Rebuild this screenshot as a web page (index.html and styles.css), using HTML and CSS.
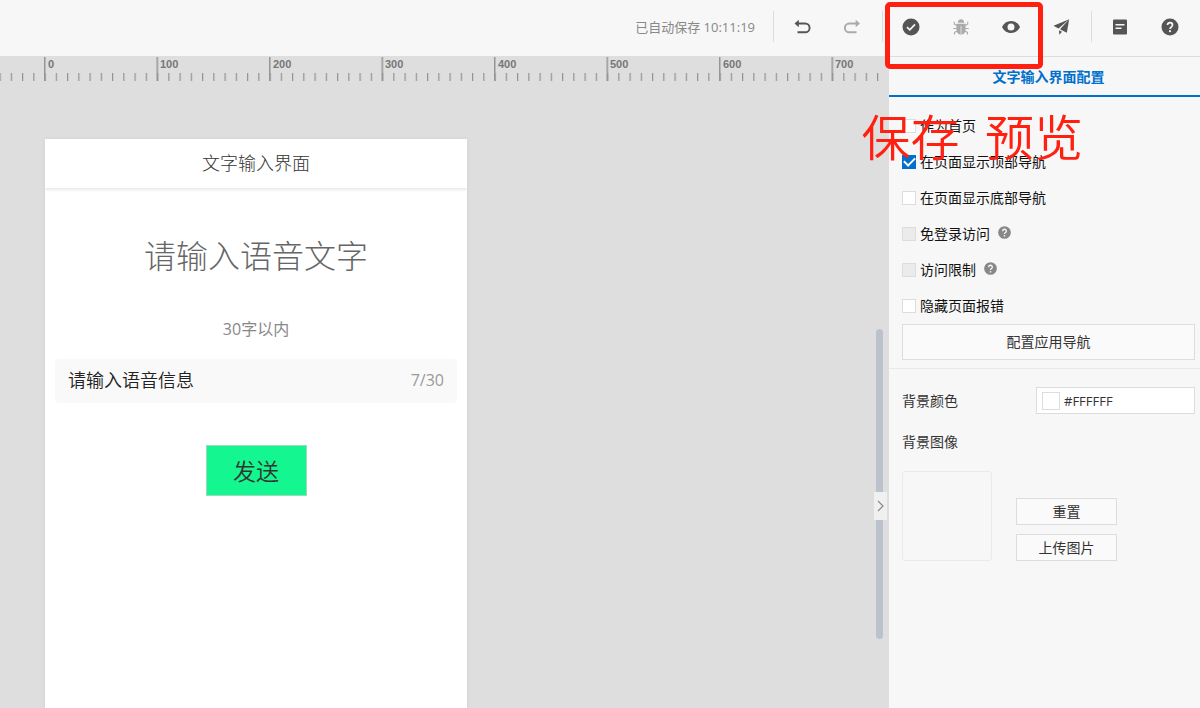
FILE: index.html
```html
<!DOCTYPE html>
<html lang="zh-CN">
<head>
<meta charset="utf-8">
<title>文字输入界面</title>
<link rel="stylesheet" href="styles.css">
</head>
<body>
<div class="app">
  <header class="toolbar">
    <span class="status">已自动保存 10:11:19</span>
    <span class="divider"></span>
    <button class="tool" aria-label="撤销"><svg width="20" height="20" viewBox="0 0 20 20"><path d="M6 6.500h7.200a4.400 4.400 0 0 1 0 8.800H5.500" fill="none" stroke="#555" stroke-width="1.900"/><path d="M2.500 6.500l4.300-3.700v7.400z" fill="#555"/></svg></button>
    <button class="tool" aria-label="重做"><svg width="20" height="20" viewBox="0 0 20 20"><path d="M14 6.500H7.300a4.400 4.400 0 0 0 0 8.800h7.200" fill="none" stroke="#aaa" stroke-width="1.900"/><path d="M18 6.500l-4.300-3.700v7.400z" fill="#aaa"/></svg></button>
    <span class="divider"></span>
    <button class="tool" aria-label="保存"><svg width="20" height="20" viewBox="0 0 20 20"><circle cx="10" cy="10" r="8.500" fill="#555"/><path d="M6 10.200l2.800 2.700 5.200-5.600" fill="none" stroke="#f7f7f7" stroke-width="1.700"/></svg></button>
    <button class="tool" aria-label="调试"><svg width="20" height="20" viewBox="0 0 20 20"><path d="M6.800 5.800C6.800 1.200 13.200 1.200 13.200 5.800z" fill="#aaa"/><path d="M5.400 6.800h9.200v5.700c0 3.200-1.800 5-4.600 5s-4.600-1.800-4.600-5z" fill="#aaa"/><path d="M10 9v8" stroke="#dedede" stroke-width="1"/><path d="M5.800 8.500L3.300 7.200V4.800M14.200 8.500l2.500-1.300V4.800M5.600 11.500H2.200M14.400 11.500h3.400M6 14.200l-2.500 1.100v2.200M14 14.200l2.500 1.100v2.200" fill="none" stroke="#aaa" stroke-width="1.100"/></svg></button>
    <button class="tool" aria-label="预览"><svg width="20" height="20" viewBox="0 0 20 20"><path fill-rule="evenodd" d="M1 10c1.800-3.800 5-6 9-6s7.200 2.200 9 6c-1.800 3.800-5 6-9 6s-7.200-2.200-9-6zm9-3.500a3.500 3.500 0 1 0 0 7 3.500 3.500 0 0 0 0-7z" fill="#555"/></svg></button>
    <button class="tool" aria-label="发布"><svg width="20" height="20" viewBox="0 0 20 20"><path d="M18.200 2.200L2.500 8.800l5 2.800z" fill="#555"/><path d="M18.200 2.200L9 12.300l6.800 3.500z" fill="#555"/><path d="M8 13.200l3 1.600-2.700 3z" fill="#555"/></svg></button>
    <span class="divider"></span>
    <button class="tool" aria-label="文档"><svg width="20" height="20" viewBox="0 0 20 20"><rect x="3" y="2.500" width="14" height="15" rx="1" fill="#555"/><path d="M5.500 7.800h9M5.500 11.200h6" stroke="#f7f7f7" stroke-width="1.500"/></svg></button>
    <button class="tool" aria-label="帮助"><svg width="20" height="20" viewBox="0 0 20 20"><circle cx="10" cy="10" r="8.500" fill="#555"/><path d="M7.500 8.100c0-3.300 5-3.300 5 0 0 2-2.500 2-2.500 4" fill="none" stroke="#f7f7f7" stroke-width="1.700"/><circle cx="10" cy="14.200" r="1.100" fill="#f7f7f7"/></svg></button>
  </header>

  <main class="stage">
    <svg class="ruler" height="26" aria-label="标尺">
      <defs>
        <pattern id="minor" x="44.500" y="0" width="11.250" height="26" patternUnits="userSpaceOnUse"><rect y="17" width="1.200" height="8" fill="#929292"/></pattern>
        <pattern id="major" x="44" y="0" width="112.500" height="26" patternUnits="userSpaceOnUse"><rect y="1" width="1.500" height="24" fill="#959595"/></pattern>
      </defs>
      <rect width="100%" height="26" fill="url(#minor)"/>
      <rect width="100%" height="26" fill="url(#major)"/>
      <g class="ruler-labels">
        <text x="48" y="12">0</text><text x="160" y="12">100</text><text x="273" y="12">200</text><text x="385" y="12">300</text><text x="498" y="12">400</text><text x="610" y="12">500</text><text x="723" y="12">600</text><text x="835" y="12">700</text>
      </g>
    </svg>
    <section class="phone">
      <h1 class="phone-nav">文字输入界面</h1>
      <div class="phone-body">
        <h2 class="headline">请输入语音文字</h2>
        <p class="hint">30字以内</p>
        <label class="field"><input class="field-input" value="请输入语音信息" aria-label="语音信息"><span class="counter">7/30</span></label>
        <button class="send">发送</button>
      </div>
    </section>
    <div class="scrollbar"></div>
    <button class="collapse" aria-label="收起面板"><svg width="9" height="12" viewBox="0 0 9 12"><path d="M2 1l5 5-5 5" fill="none" stroke="#888" stroke-width="1.200"/></svg></button>
  </main>

  <aside class="panel">
    <h2 class="tab">文字输入界面配置</h2>
    <div class="options">
      <label class="option"><input class="check" type="checkbox">作为首页</label>
      <label class="option"><input class="check" type="checkbox" checked>在页面显示顶部导航</label>
      <label class="option"><input class="check" type="checkbox">在页面显示底部导航</label>
      <label class="option"><input class="check" type="checkbox" disabled>免登录访问<svg class="help" width="13" height="13" viewBox="0 0 20 20"><circle cx="10" cy="10" r="9.800" fill="#888"/><path d="M7.200 8c0-4 5.600-4 5.600 0 0 2.200-2.800 2-2.800 4.300" fill="none" stroke="#f7f7f7" stroke-width="2"/><circle cx="10" cy="15" r="1.300" fill="#f7f7f7"/></svg></label>
      <label class="option"><input class="check" type="checkbox" disabled>访问限制<svg class="help" width="13" height="13" viewBox="0 0 20 20"><circle cx="10" cy="10" r="9.800" fill="#888"/><path d="M7.200 8c0-4 5.600-4 5.600 0 0 2.200-2.800 2-2.800 4.300" fill="none" stroke="#f7f7f7" stroke-width="2"/><circle cx="10" cy="15" r="1.300" fill="#f7f7f7"/></svg></label>
      <label class="option"><input class="check" type="checkbox">隐藏页面报错</label>
      <button class="btn btn-wide">配置应用导航</button>
    </div>
    <div class="background">
      <div class="color-row">
        <label for="bg-color">背景颜色</label>
        <div class="color-box"><span class="swatch"></span><input class="color-input" id="bg-color" value="#FFFFFF"></div>
      </div>
      <div class="image-title">背景图像</div>
      <div class="image-row">
        <div class="thumb"></div>
        <div class="image-actions">
          <button class="btn">重置</button>
          <button class="btn">上传图片</button>
        </div>
      </div>
    </div>
  </aside>

  <div class="mark-box"></div>
  <div class="mark-text">保存  预览</div>
</div>
</body>
</html>
```
FILE: styles.css
```css
* { box-sizing: border-box; }
body {
  margin: 0;
  background: #f7f7f7;
  color: #333;
  font: 14px/20px "Open Sans", "Noto Sans CJK SC", sans-serif;
}
button, input { font: inherit; color: inherit; margin: 0; padding: 0; }
h1, h2, p { margin: 0; font-weight: 400; }

.app {
  position: relative;
  display: grid;
  grid-template: 56px 1fr / 1fr 311px;
  min-height: 100vh;
  overflow: hidden;
}

.toolbar {
  grid-column: 1 / -1;
  display: flex;
  align-items: center;
  justify-content: flex-end;
  padding: 0 5px 3px 0;
}
.status { margin-right: 13px; font-size: 13px; color: #888; }
.divider { width: 1px; height: 31px; margin: 0 3px 0 5px; background: #ddd; }
.tool {
  display: grid;
  place-items: center;
  width: 50px;
  height: 40px;
  border: 0;
  background: none;
}

.stage { position: relative; background: #dedede; }
.ruler { display: block; width: calc(100% - 2px); }
.ruler-labels { font: 700 11px "Liberation Sans", sans-serif; fill: #777; }

.phone {
  width: 422px;
  height: calc(100vh - 139px);
  margin: 57px 0 0 45px;
  background: #fff;
  box-shadow: 0 0 3px #ccc;
  font-weight: 300;
}
.phone-nav {
  font-size: 18px;
  line-height: 49px;
  font-weight: 300;
  text-align: center;
  box-shadow: 0 1px 4px #ddd;
}
.phone-body {
  display: flex;
  flex-direction: column;
  align-items: center;
  padding: 40px 10px 0;
}
.headline { font-size: 32px; line-height: 56px; font-weight: 300; color: #666; }
.hint { margin-top: 34px; font-size: 16px; line-height: 22px; color: #888; }
.field {
  display: flex;
  align-items: center;
  align-self: stretch;
  height: 44px;
  margin: 19px 0 42px;
  padding: 0 13px 2px;
  border-radius: 4px;
  background: #f9f9f9;
}
.field-input {
  flex: 1;
  min-width: 0;
  border: 0;
  background: none;
  font-size: 18px;
  font-weight: 350;
  color: #222;
}
.counter { font-size: 16px; font-weight: 400; color: #999; }
.send {
  width: 101px;
  height: 51px;
  border: 1px solid #9fd9bd;
  background: #14f68f;
  font-size: 23px;
  font-weight: 350;
}

.scrollbar {
  position: absolute;
  top: 273px;
  right: 6px;
  width: 7px;
  height: 310px;
  border-radius: 4px;
  background: #bbc2cb;
}
.collapse {
  position: absolute;
  top: 436px;
  right: 2px;
  display: grid;
  place-items: center;
  width: 13px;
  height: 28px;
  border: 0;
  background: #f0f0f0;
}

.panel { border-top: 1px solid #ddd; background: #f7f7f7; }
.tab {
  padding: 2px 5px 0 13px;
  border-bottom: 2px solid #0070cc;
  font-size: 14px;
  line-height: 36px;
  font-weight: 700;
  text-align: center;
  color: #0070cc;
}
.options { padding: 11px 5px 8px 13px; border-bottom: 1px solid #e9e9e9; }
.option { display: flex; align-items: center; height: 36px; color: #111; }
.check {
  appearance: none;
  display: grid;
  place-items: center;
  width: 14px;
  height: 14px;
  margin-right: 4px;
  border: 1px solid #ddd;
  background: #fff;
}
.check:disabled { background: #ebebeb; }
.check:checked { border-color: #0070cc; background: #0070cc; }
.check:checked::before {
  content: "";
  width: 9px;
  height: 5px;
  margin-bottom: 3px;
  border: solid #fff;
  border-width: 0 0 2px 2px;
  transform: rotate(-45deg);
}
.help { margin: 0 0 3px 8px; }
.btn {
  width: 101px;
  height: 27px;
  border: 1px solid #ddd;
  background: #fafafa;
}
.btn-wide { display: block; width: 100%; height: 36px; }

.background { padding: 18px 5px 0 13px; }
.color-row { display: flex; align-items: center; justify-content: space-between; }
.color-box {
  display: flex;
  align-items: center;
  gap: 4px;
  width: 159px;
  height: 27px;
  padding: 0 5px;
  border: 1px solid #ddd;
  background: #fff;
}
.swatch { width: 18px; height: 18px; border: 1px solid #ddd; }
.color-input { flex: 1; min-width: 0; border: 0; font-size: 13px; background: none; }
.image-title { margin-top: 18px; }
.image-row { display: flex; align-items: flex-end; gap: 24px; margin-top: 19px; }
.thumb { width: 90px; height: 90px; border: 1px solid #e9eaea; border-radius: 3px; }
.image-actions { display: flex; flex-direction: column; gap: 9px; }

.mark-box {
  position: absolute;
  top: 2px;
  right: 157px;
  width: 158px;
  height: 67px;
  border: 5px solid #ff2012;
  border-radius: 5px;
}
.mark-text {
  position: absolute;
  top: 107px;
  right: 117px;
  white-space: pre;
  font-size: 49px;
  line-height: 60px;
  font-weight: 350;
  color: #ff2012;
}
```
